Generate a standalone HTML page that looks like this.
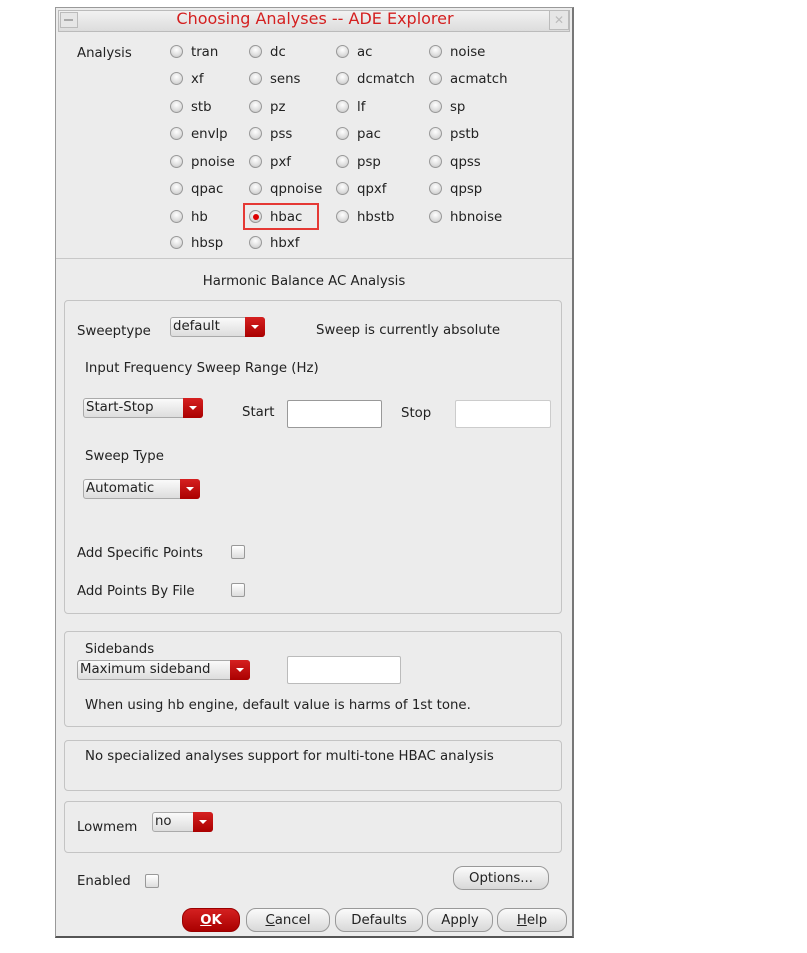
<!DOCTYPE html>
<html><head><style>
*{box-sizing:border-box}
body{margin:0;width:807px;height:953px;background:#fff;position:relative;font-family:"DejaVu Sans","Liberation Sans",sans-serif;font-size:13.3px;color:#222;overflow:hidden}
.a{position:absolute;white-space:nowrap;line-height:19px}
.win{position:absolute;left:55px;top:7px;width:519px;height:931px;background:#ececec;border:1px solid #999;border-bottom:2px solid #555;border-right:2px solid #777}
.tb{position:absolute;left:2px;top:2px;width:512px;height:22px;background:linear-gradient(#f2f2f2,#dcdcdc);border:1px solid #bbb}
.r{position:absolute;width:13px;height:13px;border-radius:50%;background:radial-gradient(circle at 50% 35%,#fff,#ddd 60%,#bbb);border:1px solid #999}
.box{position:absolute;left:64px;width:498px;border:1px solid #c4c4c4;border-radius:4px}
.dd{position:absolute;height:20px;border:1px solid #aaa;border-radius:3px;background:linear-gradient(#fafafa,#ddd);padding-left:2px;line-height:17px}
.dd i{position:absolute;right:-1px;top:-1px;width:20px;height:20px;background:linear-gradient(#d52020,#a00);border-radius:0 3px 3px 0}
.dd i:after{content:"";position:absolute;left:6px;top:8px;border-left:4px solid transparent;border-right:4px solid transparent;border-top:4px solid #fff}
.in{position:absolute;height:28px;background:#fff;border:1px solid #999;border-radius:2px}
.cb{position:absolute;width:14px;height:14px;border:1px solid #999;border-radius:2px;background:linear-gradient(#fff,#ddd)}
.bt{position:absolute;height:24px;border:1px solid #999;border-radius:10px;background:linear-gradient(#fbfbfb,#d8d8d8);text-align:center;line-height:24px}
</style></head><body>
<div class="win"><div class="tb"></div></div>
<div class="a" style="left:60px;top:12px;width:18px;height:16px;border:1px solid #bbb;background:#e6e6e6"></div>
<div class="a" style="left:64px;top:19px;width:9px;height:2px;background:#aaa"></div>
<div class="a" style="left:549px;top:10px;width:20px;height:20px;border:1px solid #bbb;background:#e6e6e6;color:#bbb;text-align:center;font-size:12px;line-height:18px">✕</div>
<div class="a" style="left:80px;width:470px;top:9px;text-align:center;color:#d42020;font-size:16px">Choosing Analyses -- ADE Explorer</div>
<div class="a" style="left:77px;top:44px">Analysis</div>

<div class="r" style="left:170px;top:45px"></div><div class="a" style="left:191px;top:43px">tran</div>
<div class="r" style="left:249px;top:45px"></div><div class="a" style="left:270px;top:43px">dc</div>
<div class="r" style="left:336px;top:45px"></div><div class="a" style="left:357px;top:43px">ac</div>
<div class="r" style="left:429px;top:45px"></div><div class="a" style="left:450px;top:43px">noise</div>

<div class="r" style="left:170px;top:72px"></div><div class="a" style="left:191px;top:70px">xf</div>
<div class="r" style="left:249px;top:72px"></div><div class="a" style="left:270px;top:70px">sens</div>
<div class="r" style="left:336px;top:72px"></div><div class="a" style="left:357px;top:70px">dcmatch</div>
<div class="r" style="left:429px;top:72px"></div><div class="a" style="left:450px;top:70px">acmatch</div>

<div class="r" style="left:170px;top:100px"></div><div class="a" style="left:191px;top:98px">stb</div>
<div class="r" style="left:249px;top:100px"></div><div class="a" style="left:270px;top:98px">pz</div>
<div class="r" style="left:336px;top:100px"></div><div class="a" style="left:357px;top:98px">lf</div>
<div class="r" style="left:429px;top:100px"></div><div class="a" style="left:450px;top:98px">sp</div>

<div class="r" style="left:170px;top:127px"></div><div class="a" style="left:191px;top:125px">envlp</div>
<div class="r" style="left:249px;top:127px"></div><div class="a" style="left:270px;top:125px">pss</div>
<div class="r" style="left:336px;top:127px"></div><div class="a" style="left:357px;top:125px">pac</div>
<div class="r" style="left:429px;top:127px"></div><div class="a" style="left:450px;top:125px">pstb</div>

<div class="r" style="left:170px;top:155px"></div><div class="a" style="left:191px;top:153px">pnoise</div>
<div class="r" style="left:249px;top:155px"></div><div class="a" style="left:270px;top:153px">pxf</div>
<div class="r" style="left:336px;top:155px"></div><div class="a" style="left:357px;top:153px">psp</div>
<div class="r" style="left:429px;top:155px"></div><div class="a" style="left:450px;top:153px">qpss</div>

<div class="r" style="left:170px;top:182px"></div><div class="a" style="left:191px;top:180px">qpac</div>
<div class="r" style="left:249px;top:182px"></div><div class="a" style="left:270px;top:180px">qpnoise</div>
<div class="r" style="left:336px;top:182px"></div><div class="a" style="left:357px;top:180px">qpxf</div>
<div class="r" style="left:429px;top:182px"></div><div class="a" style="left:450px;top:180px">qpsp</div>

<div class="r" style="left:170px;top:210px"></div><div class="a" style="left:191px;top:208px">hb</div>
<div class="a" style="left:243px;top:203px;width:76px;height:27px;border:2px solid #e53935"></div>
<div class="r" style="left:249px;top:210px"></div><div class="a" style="left:253px;top:214px;width:6px;height:6px;border-radius:50%;background:#d00"></div><div class="a" style="left:270px;top:208px">hbac</div>
<div class="r" style="left:336px;top:210px"></div><div class="a" style="left:357px;top:208px">hbstb</div>
<div class="r" style="left:429px;top:210px"></div><div class="a" style="left:450px;top:208px">hbnoise</div>

<div class="r" style="left:170px;top:236px"></div><div class="a" style="left:191px;top:234px">hbsp</div>
<div class="r" style="left:249px;top:236px"></div><div class="a" style="left:270px;top:234px">hbxf</div>

<div class="a" style="left:56px;top:258px;width:516px;height:1px;background:#c8c8c8"></div>
<div class="a" style="left:56px;width:496px;top:272px;text-align:center">Harmonic Balance AC Analysis</div>

<div class="box" style="top:300px;height:314px"></div>
<div class="a" style="left:77px;top:322px">Sweeptype</div>
<div class="dd" style="left:170px;top:317px;width:95px">default<i></i></div>
<div class="a" style="left:316px;top:321px">Sweep is currently absolute</div>
<div class="a" style="left:85px;top:359px">Input Frequency Sweep Range (Hz)</div>
<div class="dd" style="left:83px;top:398px;width:120px">Start-Stop<i></i></div>
<div class="a" style="left:242px;top:403px">Start</div>
<div class="in" style="left:287px;top:400px;width:95px"></div>
<div class="a" style="left:401px;top:404px">Stop</div>
<div class="in" style="left:455px;top:400px;width:96px;border-color:#ccc"></div>
<div class="a" style="left:85px;top:447px">Sweep Type</div>
<div class="dd" style="left:83px;top:479px;width:117px">Automatic<i></i></div>
<div class="a" style="left:77px;top:544px">Add Specific Points</div>
<div class="cb" style="left:231px;top:545px"></div>
<div class="a" style="left:77px;top:582px">Add Points By File</div>
<div class="cb" style="left:231px;top:583px"></div>

<div class="box" style="top:631px;height:96px"></div>
<div class="a" style="left:85px;top:640px">Sidebands</div>
<div class="dd" style="left:77px;top:660px;width:173px">Maximum sideband<i></i></div>
<div class="in" style="left:287px;top:656px;width:114px;border-color:#bbb"></div>
<div class="a" style="left:85px;top:696px">When using hb engine, default value is harms of 1st tone.</div>

<div class="box" style="top:740px;height:51px"></div>
<div class="a" style="left:85px;top:747px">No specialized analyses support for multi-tone HBAC analysis</div>

<div class="box" style="top:801px;height:52px"></div>
<div class="a" style="left:77px;top:818px">Lowmem</div>
<div class="dd" style="left:152px;top:812px;width:61px">no<i></i></div>

<div class="a" style="left:77px;top:872px">Enabled</div>
<div class="cb" style="left:145px;top:874px"></div>
<div class="bt" style="left:453px;top:866px;width:96px">Options...</div>
<div class="bt" style="left:182px;top:908px;width:58px;background:linear-gradient(#d42020,#a00);border-color:#900;color:#fff;font-weight:bold"><u>O</u>K</div>
<div class="bt" style="left:246px;top:908px;width:84px"><u>C</u>ancel</div>
<div class="bt" style="left:335px;top:908px;width:88px">Defaults</div>
<div class="bt" style="left:427px;top:908px;width:66px">Apply</div>
<div class="bt" style="left:497px;top:908px;width:70px"><u>H</u>elp</div>
</body></html>
